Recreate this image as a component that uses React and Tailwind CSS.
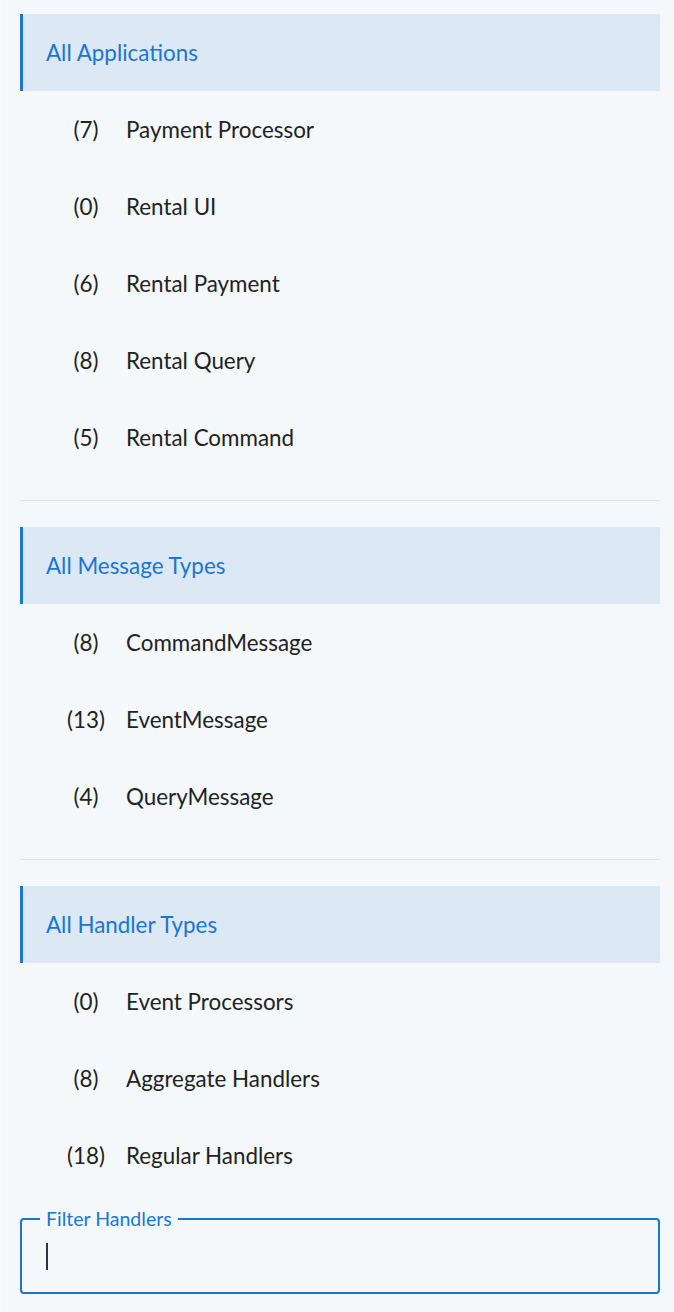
import React from "react";

const sections = [
  {
    title: "All Applications",
    items: [
      ["7", "Payment Processor"],
      ["0", "Rental UI"],
      ["6", "Rental Payment"],
      ["8", "Rental Query"],
      ["5", "Rental Command"],
    ],
  },
  {
    title: "All Message Types",
    items: [
      ["8", "CommandMessage"],
      ["13", "EventMessage"],
      ["4", "QueryMessage"],
    ],
  },
  {
    title: "All Handler Types",
    items: [
      ["0", "Event Processors"],
      ["8", "Aggregate Handlers"],
      ["18", "Regular Handlers"],
    ],
  },
];

function Section({ title, items }) {
  return (
    <div>
      <div className="h-[77px] flex items-center border-l-[3px] border-[#1976d2] bg-[#dce8f4] pl-[23px] text-[22.4px] text-[#1976d2]">
        {title}
      </div>
      {items.map(([n, label]) => (
        <div key={label} className="h-[77px] flex items-center text-[22.4px] text-[#222222]">
          <span className="w-[106px] pl-[26px] text-center">({n})</span>
          <span>{label}</span>
        </div>
      ))}
    </div>
  );
}

export default function App() {
  return (
    <div
      className="w-[674px] min-h-[1312px] bg-[#f5f8fb] border-l border-[#f9fbfc] pl-[19px] pr-[14px] pt-[14px] pb-[17px]"
      style={{ fontFamily: "Lato, 'Noto Sans', sans-serif" }}
    >
      <Section {...sections[0]} />
      <div className="mt-[24px] mb-[26px] h-px bg-[#dfe3e7]" />
      <Section {...sections[1]} />
      <div className="mt-[24px] mb-[26px] h-px bg-[#dfe3e7]" />
      <Section {...sections[2]} />
      <fieldset className="mt-[13px] h-[87px] border-2 border-[#1976d2] rounded-[4px] px-0 pb-0">
        <legend className="ml-[18px] px-[6px] text-[19.5px] leading-[24px] text-[#1976d2]">
          Filter Handlers
        </legend>
        <div className="pl-[24px] pt-[12px]">
          <div className="w-[2px] h-[27px] bg-[#2a3340]" />
        </div>
      </fieldset>
    </div>
  );
}
